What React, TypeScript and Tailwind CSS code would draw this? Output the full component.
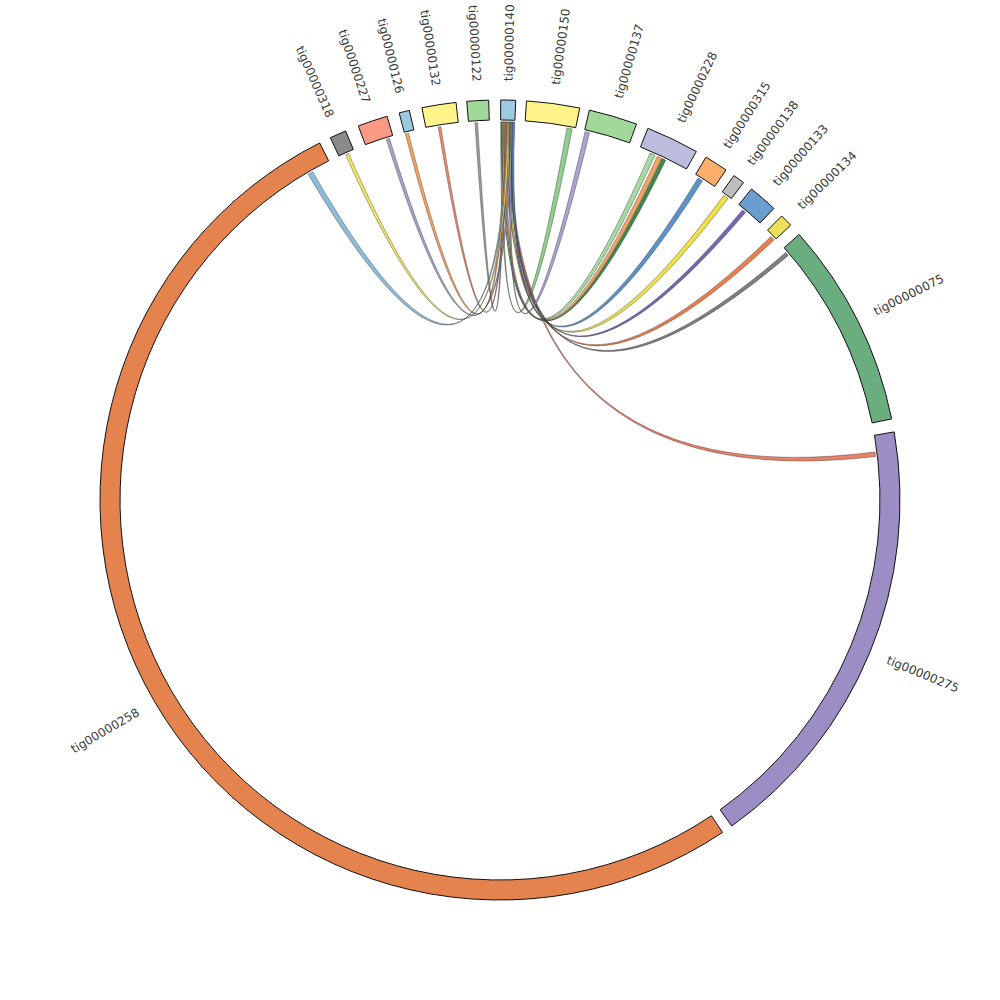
import React from "react"

// circos-like contig link plot
const CX = 500
const CY = 500
const R_OUT = 400
const R_IN = 380
const R_LINK = 378
const R_LABEL = 419

const pt = (deg: number, r: number): [number, number] => {
    const a = (deg * Math.PI) / 180
    return [CX + r * Math.sin(a), CY - r * Math.cos(a)]
}

type Segment = { name: string; start: number; end: number; color: string }

const segments: Segment[] = [
    { name: "tig00000258", start: 146.2, end: 333.2, color: "#e5834f" },
    { name: "tig00000318", start: 334.9, end: 337.3, color: "#8a8a8a" },
    { name: "tig00000227", start: 339.25, end: 343.6, color: "#fb9a84" },
    { name: "tig00000126", start: 345.4, end: 346.9, color: "#9ecae1" },
    { name: "tig00000132", start: 348.74, end: 353.69, color: "#fff38a" },
    { name: "tig00000122", start: 355.23, end: 358.38, color: "#a1d99b" },
    { name: "tig00000140", start: 0.1, end: 2.25, color: "#9ecae1" },
    { name: "tig00000150", start: 3.8, end: 11.5, color: "#fff38a" },
    { name: "tig00000137", start: 12.9, end: 19.95, color: "#a1d99b" },
    { name: "tig00000228", start: 21.7, end: 29.4, color: "#bcbddc" },
    { name: "tig00000315", start: 31.0, end: 34.4, color: "#fdae6b" },
    { name: "tig00000138", start: 35.8, end: 37.5, color: "#bdbdbd" },
    { name: "tig00000133", start: 38.96, end: 43.2, color: "#6a9ecf" },
    { name: "tig00000134", start: 44.76, end: 46.6, color: "#ece05a" },
    { name: "tig00000075", start: 48.4, end: 78.3, color: "#6aae80" },
    { name: "tig00000275", start: 80.2, end: 144.6, color: "#9c8ec4" },
]

// other end of each link (all links go to tig00000140), in slot order on 140
type Link = { from: [number, number]; color: string }

const links: Link[] = [
    { from: [10.2, 11.0], color: "#90cf8e" },
    { from: [25.4, 26.0], color: "#3f8a4a" },
    { from: [23.4, 24.2], color: "#a8dba2" },
    { from: [356.2, 356.6], color: "#a0a0a0" },
    { from: [345.5, 346.0], color: "#f7a45e" },
    { from: [24.6, 25.3], color: "#f7a462" },
    { from: [350.6, 351.0], color: "#f08a70" },
    { from: [45.8, 46.5], color: "#e8804e" },
    { from: [329.5, 330.3], color: "#8cbcdc" },
    { from: [335.9, 336.4], color: "#f5e663" },
    { from: [36.3, 37.1], color: "#efe04a" },
    { from: [82.7, 83.4], color: "#e8806a" },
    { from: [49.1, 49.7], color: "#808080" },
    { from: [13.0, 13.7], color: "#aaa4d0" },
    { from: [342.5, 343.0], color: "#a9a3cc" },
    { from: [39.9, 40.5], color: "#7566b0" },
    { from: [31.6, 32.4], color: "#5b93c8" },
]

const segmentPath = (s: Segment) => {
    const large = s.end - s.start > 180 ? 1 : 0
    const [x0, y0] = pt(s.start, R_OUT)
    const [x1, y1] = pt(s.end, R_OUT)
    const [x2, y2] = pt(s.end, R_IN)
    const [x3, y3] = pt(s.start, R_IN)
    return `M${x0},${y0} A${R_OUT},${R_OUT} 0 ${large} 1 ${x1},${y1} L${x2},${y2} A${R_IN},${R_IN} 0 ${large} 0 ${x3},${y3} Z`
}

const ribbonPath = (s0: number, s1: number, t0: number, t1: number) => {
    const r = R_LINK
    const [x0, y0] = pt(s0, r)
    const [x1, y1] = pt(s1, r)
    const [x2, y2] = pt(t0, r)
    const [x3, y3] = pt(t1, r)
    return `M${x0},${y0} A${r},${r} 0 0 1 ${x1},${y1} Q${CX},${CY} ${x2},${y2} A${r},${r} 0 0 1 ${x3},${y3} Q${CX},${CY} ${x0},${y0} Z`
}

function Label({ seg }: { seg: Segment }) {
    const mid = (seg.start + seg.end) / 2
    const [x, y] = pt(mid, R_LABEL)
    const right = mid < 180
    const rot = right ? mid - 90 : mid + 90
    return (
        <text
            transform={`translate(${x},${y}) rotate(${rot})`}
            textAnchor={right ? "start" : "end"}
            dominantBaseline="central"
        >
            {seg.name}
        </text>
    )
}

export default function App() {
    const hub = segments.find(s => s.name === "tig00000140")!
    const w = 0.3
    const step = (hub.end - hub.start - w) / (links.length - 1)

    return (
        <div className="w-[1000px] h-[1000px] bg-white">
            <svg width={1000} height={1000} viewBox="0 0 1000 1000">
                {/* links */}
                <g stroke="#222" strokeWidth={0.5} strokeOpacity={0.75}>
                    {links.map((l, i) => {
                        const t0 = hub.start + i * step
                        return <path key={i} d={ribbonPath(l.from[0], l.from[1], t0, t0 + w)} fill={l.color} />
                    })}
                </g>

                {/* contigs */}
                <g stroke="#111" strokeWidth={1}>
                    {segments.map(s => (
                        <path key={s.name} d={segmentPath(s)} fill={s.color} />
                    ))}
                </g>

                {/* labels */}
                <g fontSize={12} fill="#3a3a3a" fontFamily='"DejaVu Sans", Verdana, sans-serif'>
                    {segments.map(s => (
                        <Label key={s.name} seg={s} />
                    ))}
                </g>
            </svg>
        </div>
    )
}
